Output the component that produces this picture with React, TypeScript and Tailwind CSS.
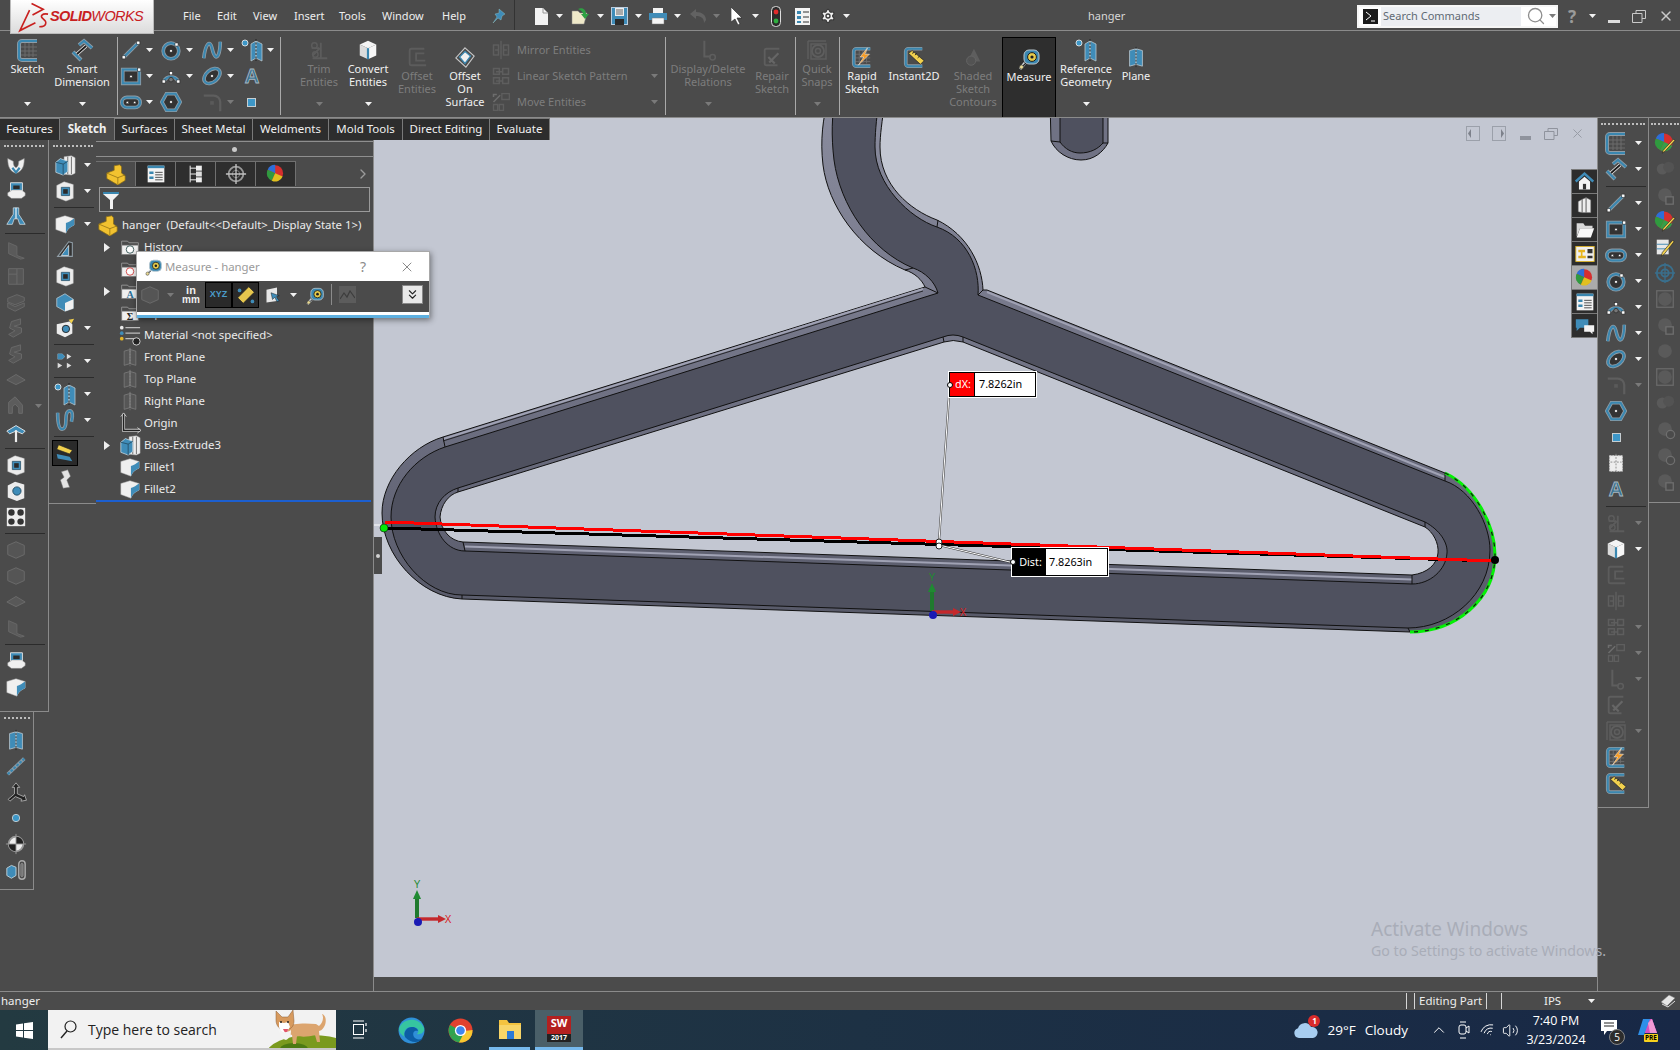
import type { ReactNode } from "react";
import { ChevronRight, ChevronUp, ChevronsDown, Search, Settings, Volume2, Wifi, X } from "lucide-react";

const ICON_BLUE = "#3a87b0";
const ICON_HALO = "#8f9ca5";
const DIM = "#606060";

function Ico({ s = 22, children }: { s?: number; children: ReactNode }) {
  return (
    <svg width={s} height={s} viewBox="0 0 24 24" fill="none" className="shrink-0">
      {children}
    </svg>
  );
}

function Str({ d, dim }: { d: string; dim?: boolean }) {
  if (dim) return <path d={d} stroke={DIM} strokeWidth="2.4" fill="none" />;
  return (
    <>
      <path d={d} stroke={ICON_HALO} strokeWidth="4" fill="none" />
      <path d={d} stroke={ICON_BLUE} strokeWidth="2.2" fill="none" />
    </>
  );
}

function Dot({ x, y, r = 1.7 }: { x: number; y: number; r?: number }) {
  return <rect x={x - r} y={y - r} width={r * 2} height={r * 2} fill="#fff" stroke="#222" strokeWidth="0.6" />;
}

function Caret({ off }: { off?: boolean }) {
  return (
    <svg width="7" height="4" viewBox="0 0 7 4" className="shrink-0">
      <path d="M0 0h7L3.5 4z" fill={off ? "#7a7a7a" : "#f2f2f2"} />
    </svg>
  );
}

const SketchI = ({ dim }: { dim?: boolean }) => (
  <Ico s={24}>
    <path d="M9 5v14M13 5v14M17 5v14M5 9h16M5 13h16M5 17h16" stroke="#6d6d6d" strokeWidth="1" />
    <Str d="M21 3H6a3 3 0 0 0-3 3v13a3 3 0 0 0 3 3h15" dim={dim} />
  </Ico>
);
const SmartDimI = () => (
  <Ico s={24}>
    <Str d="M9 7l5-4 8 7" />
    <Str d="M3 14l8 8" />
    <path d="M7 16l9-8" stroke="#eee" strokeWidth="3.4" />
    <path d="M7 16l9-8" stroke="#1c1c1c" strokeWidth="1.8" />
  </Ico>
);
const LineI = () => (
  <Ico>
    <Str d="M4 20L20 4" />
    <Dot x={4} y={20} />
    <Dot x={20} y={4} />
  </Ico>
);
const RectI = () => (
  <Ico>
    <rect x="3" y="5" width="18" height="15" fill="#333" />
    <Str d="M3 5h18v15H3z" />
    <Dot x={12} y={12.5} r={1.3} />
    <Dot x={21} y={5} />
  </Ico>
);
const SlotI = () => (
  <Ico>
    <rect x="2" y="7" width="20" height="11" rx="5.5" fill="#333" />
    <Str d="M7.5 7h9a5.5 5.5 0 0 1 0 11h-9a5.5 5.5 0 0 1 0-11z" />
    <Dot x={8} y={12.5} r={1.3} />
    <Dot x={16} y={12.5} r={1.3} />
  </Ico>
);
const CircleI = () => (
  <Ico>
    <circle cx="12" cy="13" r="8.5" fill="#333" />
    <Str d="M20.5 13a8.5 8.5 0 1 1-17 0 8.5 8.5 0 0 1 17 0z" />
    <Dot x={12} y={13} r={1.3} />
    <Dot x={18} y={6} />
  </Ico>
);
const ArcI = () => (
  <Ico>
    <Str d="M4 18a9 9 0 0 1 16 0" />
    <circle cx="12" cy="16" r="2.5" fill="#777" stroke="#333" />
    <Dot x={4} y={18} />
    <Dot x={12} y={9} />
    <Dot x={20} y={18} />
  </Ico>
);
const SplineI = () => (
  <Ico>
    <Str d="M3 21C5 4 10 1 12 10s5 12 7 7 2-10 2-14" />
  </Ico>
);
const EllipseI = () => (
  <Ico>
    <g transform="rotate(-40 12 12)">
      <ellipse cx="12" cy="12" rx="10" ry="6.5" fill="#333" stroke={ICON_HALO} strokeWidth="4" />
      <ellipse cx="12" cy="12" rx="10" ry="6.5" stroke={ICON_BLUE} strokeWidth="2.2" />
    </g>
    <Dot x={12} y={12} r={1.3} />
  </Ico>
);
const FilletI = () => (
  <Ico>
    <path d="M3 5h11a7 7 0 0 1 7 7v10" stroke="#5e5e5e" strokeWidth="2.4" />
    <rect x="10" y="11" width="4" height="4" fill="#5a5a5a" />
  </Ico>
);
const PolyI = () => (
  <Ico>
    <path d="M7 3h10l5 9-5 9H7l-5-9z" fill="#333" />
    <Str d="M7 3h10l5 9-5 9H7l-5-9z" />
    <Dot x={12} y={12} r={1.3} />
  </Ico>
);
const PointI = () => (
  <svg width="9" height="9" viewBox="0 0 9 9" className="mx-[6px] shrink-0">
    <rect x="0.5" y="0.5" width="8" height="8" fill="#3d97c8" stroke="#c6ced2" />
  </svg>
);
const PlaneI = ({ dim, s = 22 }: { dim?: boolean; s?: number }) => (
  <Ico s={s}>
    <path d="M5 5l7 -2v17l-7 2zM12 3l7 2v17l-7-2z" fill={dim ? "#565656" : "#3f8cb8"} stroke={dim ? "#808080" : "#b8c6ce"} strokeWidth="0.9" />
    <path d="M12 1v22" stroke={dim ? "#888" : "#222"} strokeDasharray="2 1.5" />
  </Ico>
);
const NoisyPlaneI = () => (
  <Ico>
    <path d="M5 4h14v17H5z" fill="#eee" stroke="#ccc" strokeDasharray="2 1" />
    <path d="M12 2v20M6 11h12" stroke="#888" strokeDasharray="2 1.5" />
  </Ico>
);
const TextI = () => (
  <Ico>
    <text x="12" y="20" textAnchor="middle" fontFamily="Liberation Sans" fontWeight="700" fontSize="22" fill="#35708f" stroke="#a8b7c0" strokeWidth="0.9">
      A
    </text>
  </Ico>
);
const TrimI = () => (
  <Ico>
    <path d="M5 18l8-8M14 4v17M5 21h16M4 10h8" stroke="#5c5c5c" strokeWidth="2" />
    <circle cx="7" cy="7" r="3" stroke="#5c5c5c" strokeWidth="1.6" />
    <circle cx="8" cy="17" r="3" stroke="#5c5c5c" strokeWidth="1.6" />
  </Ico>
);
const CubeI = () => (
  <Ico>
    <path d="M12 2l9 4-9 4-9-4z" fill="#f4f4f4" />
    <path d="M3 6l9 4v12l-9-4z" fill="#dcdcdc" />
    <path d="M21 6l-9 4v12l9-4z" fill="#f7f7f7" />
    <path d="M12 10v12" stroke={ICON_BLUE} strokeWidth="2.4" />
  </Ico>
);
const OffsetI = () => (
  <Ico>
    <path d="M20 3H6a2 2 0 0 0-2 2v14a2 2 0 0 0 2 2h16" stroke="#5c5c5c" strokeWidth="2" />
    <path d="M20 8h-9v8h10" stroke="#5c5c5c" strokeWidth="2" />
  </Ico>
);
const OffsetSurfI = () => (
  <Ico>
    <path d="M12 2l10 9-9 12L2 13z" fill="#4b4b4b" stroke="#c9c9c9" strokeWidth="1.2" />
    <path d="M12 6l6 5-6 8-6-7z" fill="#f0f0f0" stroke="#3a87b0" strokeWidth="1.4" />
  </Ico>
);
const MirrorI = () => (
  <Ico s={20}>
    <path d="M12 1v22M3 6h6v12H3zM15 6h6v12h-6zM5 12h4M15 12h4" stroke="#5e5e5e" strokeWidth="1.8" />
  </Ico>
);
const PatternI = () => (
  <Ico s={20}>
    <path d="M3 3h7v7H3zM14 3h7v7h-7zM3 14h7v7H3zM14 14h7v7h-7zM6 7h8M6 18h8" stroke="#5e5e5e" strokeWidth="1.8" />
  </Ico>
);
const MoveI = () => (
  <Ico s={20}>
    <path d="M3 12l8-8M3 6V3h4" stroke="#6d6d6d" strokeWidth="1.8" />
    <path d="M13 2h9v7h-9zM3 15h5v7H3zM10 15h5v7h-5z" stroke="#5e5e5e" strokeWidth="1.6" />
  </Ico>
);
const RelationI = () => (
  <Ico>
    <path d="M8 2v17h7" stroke="#5e5e5e" strokeWidth="2.2" />
    <circle cx="17" cy="20" r="3" stroke="#5e5e5e" strokeWidth="1.6" />
  </Ico>
);
const RepairI = () => (
  <Ico>
    <path d="M20 3H6a2 2 0 0 0-2 2v14a2 2 0 0 0 2 2h12" stroke="#5e5e5e" strokeWidth="2" />
    <path d="M9 18l10-10M8 12l7 7" stroke="#666" strokeWidth="2.4" />
  </Ico>
);
const SnapI = () => (
  <Ico s={24}>
    <path d="M3 3h18M3 3v18M6 6h15v15H6z" stroke="#5e5e5e" strokeWidth="1.4" />
    <circle cx="13" cy="13" r="6" stroke="#5e5e5e" strokeWidth="1.8" />
    <circle cx="13" cy="13" r="2.5" stroke="#5e5e5e" strokeWidth="1.4" />
  </Ico>
);
const RapidI = () => (
  <Ico>
    <path d="M9 5v14M13 5v14M17 5v14M5 9h16M5 13h16M5 17h16" stroke="#6d6d6d" strokeWidth="1" />
    <Str d="M21 3H6a3 3 0 0 0-3 3v13a3 3 0 0 0 3 3h15" />
    <path d="M18 2l-8 10h4l-6 9 12-12h-5z" fill="#f59a23" stroke="#fff" strokeWidth="0.5" />
  </Ico>
);
const InstantI = () => (
  <Ico>
    <Str d="M21 3H6a3 3 0 0 0-3 3v13a3 3 0 0 0 3 3h15" />
    <path d="M6 8l4-3 13 11-4 4z" fill="#f2d14e" stroke="#222" strokeWidth="0.7" />
    <path d="M10 8l2-1M13 10l2-2M16 13l2-2" stroke="#222" strokeWidth="1" />
  </Ico>
);
const ShadedI = () => (
  <Ico>
    <path d="M13 3l7 14H6z" fill="#5e5e5e" />
    <circle cx="10" cy="16" r="5" fill="#535353" stroke="#666" />
  </Ico>
);
const TapeI = ({ s = 24 }: { s?: number }) => (
  <Ico s={s}>
    <path d="M3 23l5-6" stroke="#cfd5d8" strokeWidth="3" />
    <path d="M6 20l3-3" stroke="#222" strokeWidth="1.2" />
    <rect x="7" y="4" width="15" height="14" rx="5" fill="#3a87b0" stroke="#b6c4cc" />
    <circle cx="15" cy="11" r="4.4" fill="#e6cb4b" stroke="#1d1d1d" />
    <circle cx="15" cy="11" r="1.6" fill="#1d1d1d" />
    <circle cx="4.5" cy="21" r="2" fill="#eadb95" stroke="#333" strokeWidth="0.6" />
  </Ico>
);
const RefGeoI = () => (
  <Ico s={24}>
    <path d="M11 6l5-3v17l-5 3zM16 3l6 3v17l-6-3z" fill="#3f8cb8" stroke="#b8c6ce" strokeWidth="0.8" />
    <path d="M16 1v22" stroke="#222" strokeDasharray="2 1.5" />
    <circle cx="5" cy="5" r="3" fill="#3d97c8" stroke="#d6dde0" />
  </Ico>
);

const BoxI = () => (
  <Ico>
    <path d="M11 3l8-1 4 2v17l-4 2-8-1z" fill="#ededed" stroke="#ababab" strokeWidth="0.5" />
    <path d="M15 3v19M19 3v19" stroke="#5a5a5a" strokeWidth="0.9" />
    <path d="M2 9l5-4 8 3v11l-5 4-8-3z" fill="#3f8cb8" stroke="#cfe0e8" strokeWidth="0.8" />
    <path d="M10 11v12M10 11L2 9M10 11l5-3" stroke="#234b62" strokeWidth="0.9" />
  </Ico>
);
const WedgeI = () => (
  <Ico>
    <path d="M2 6l10-3 10 3v7c-3 2-7 3-9 9L2 18z" fill="#efefef" stroke="#aaa" strokeWidth="0.5" />
    <path d="M13 11c3-1 6-3 9-5v7c-3 2-7 3-9 9z" fill="#3f8cb8" />
  </Ico>
);
const BlueBoxI = () => (
  <Ico>
    <path d="M3 8l9-5 9 6v10l-9 3-9-5z" fill="#3f8cb8" stroke="#c1d2da" strokeWidth="0.8" />
    <path d="M12 13l9-4v10l-9 3z" fill="#f1f1f1" />
  </Ico>
);
const FrameI = () => (
  <Ico>
    <path d="M3 6l8-4 10 3v15l-8 3-10-4z" fill="#ececec" stroke="#bbb" strokeWidth="0.5" />
    <path d="M8 8h9v9H8z" fill="#3f8cb8" stroke="#234b62" strokeWidth="0.8" />
    <path d="M10 10h5v5h-5z" fill="#2a2a2a" />
  </Ico>
);
const BendI = () => (
  <Ico>
    <path d="M4 19L16 3l4 1v15z" fill="#333" stroke={ICON_HALO} strokeWidth="1.2" />
    <path d="M8 18l8-11v11z" fill="#3f8cb8" stroke="#fff" strokeWidth="0.7" />
  </Ico>
);
const UI = () => (
  <Ico>
    <path d="M3 5c0 10 3 14 9 16 6-2 9-6 9-16l-6 3c0 4-1 6-3 7-2-1-3-3-3-7z" fill="#efefef" stroke="#999" strokeWidth="0.6" />
    <path d="M8 15l4 5 4-5" stroke={ICON_BLUE} strokeWidth="2.4" />
  </Ico>
);
const PrintBoxI = () => (
  <Ico>
    <path d="M6 3h13v9H6z" fill="#3f8cb8" stroke="#e6e6e6" />
    <path d="M9 6h7v4H9z" fill="#2b2b2b" />
    <path d="M3 14l5-3h10l4 3v3l-4 3H7l-4-3z" fill="#f0f0f0" stroke="#9f9f9f" strokeWidth="0.5" />
  </Ico>
);
const FunnelBlueI = () => (
  <Ico>
    <path d="M9 2h6v7l7 11h-6l-2-6h-4l-2 6H2l7-11z" fill="#3f8cb8" stroke="#d7e1e6" strokeWidth="0.8" />
    <path d="M12 2v12" stroke="#fff" strokeWidth="1.2" />
  </Ico>
);
const DimPartI = ({ v = 0 }: { v?: number }) => (
  <Ico>
    {v === 0 && <path d="M4 4l9 4v10l8 3-4 1-13-6z" fill="#5a5a5a" stroke="#686868" />}
    {v === 1 && <path d="M4 4h16v17H4zM4 10h9v11M13 4v6" fill="#565656" stroke="#6b6b6b" />}
    {v === 2 && <path d="M3 8l10-4 8 3v4l-10 4-8-3zM3 13l8 4 10-4v4l-10 5-8-4z" fill="#545454" stroke="#6a6a6a" />}
    {v === 3 && <path d="M7 5l10-3v6l-7 2 8 2v5l-9 5-5-3 7-4-6-3z" fill="#565656" stroke="#6a6a6a" />}
    {v === 4 && <path d="M2 12l10-6 10 6-10 5z" fill="#585858" stroke="#6c6c6c" />}
    {v === 5 && <path d="M4 20V8l7-6 8 9v9h-4v-6l-4-4-3 3v7z" fill="#5c5c5c" stroke="#6c6c6c" />}
    {v === 6 && <path d="M3 7l9-4 9 4v10l-9 4-9-4z" fill="#555" stroke="#6c6c6c" />}
  </Ico>
);
const DimBallI = ({ v = 0 }: { v?: number }) => (
  <Ico>
    {v === 1 && <rect x="3" y="3" width="18" height="18" stroke="#6a6a6a" strokeWidth="1.4" />}
    <circle cx={v === 2 ? 9 : 12} cy={12} r={v === 2 ? 6 : 7.5} fill="#5a5a5a" />
    {v === 2 && <circle cx="16" cy="10" r="6" fill="#535353" />}
    {v === 3 && <rect x="13" y="14" width="8" height="8" fill="#4b4b4b" stroke="#6f6f6f" strokeWidth="1.4" />}
    {v === 4 && <circle cx="18" cy="18" r="4.5" fill="#4b4b4b" stroke="#6f6f6f" strokeWidth="1.4" />}
  </Ico>
);
const ColorBallI = ({ s = 22, pencil }: { s?: number; pencil?: boolean }) => (
  <Ico s={s}>
    <circle cx="11" cy="11" r="9.5" fill="#d62f2f" />
    <path d="M11 11L2 7a9.5 9.5 0 0 1 9-6z" fill="#2d6ed8" />
    <path d="M11 11L2 7a9.5 9.5 0 0 0 5 13z" fill="#2f9a3f" />
    <path d="M11 11l-4 9a9.5 9.5 0 0 0 13-5z" fill={pencil ? "#35a048" : "#e0c01f"} />
    {pencil && <path d="M23 9l-11 12-3 2 1-3 11-12z" fill="#f2d14e" stroke="#222" strokeWidth="0.7" />}
  </Ico>
);

type Row = "sep" | { i: ReactNode; c?: "on" | "off"; sel?: boolean };

const col1: Row[] = [
  { i: <UI /> }, { i: <PrintBoxI /> }, { i: <FunnelBlueI /> }, "sep",
  { i: <DimPartI v={0} /> }, { i: <DimPartI v={1} /> }, { i: <DimPartI v={2} /> }, { i: <DimPartI v={3} /> }, { i: <DimPartI v={3} /> }, { i: <DimPartI v={4} /> }, { i: <DimPartI v={5} />, c: "off" },
  { i: <Ico><path d="M2 11l10-6 10 6-3 3-7-3-7 3z" fill="#3f8cb8" stroke="#e8e8e8" /><path d="M12 10v13" stroke="#eee" strokeWidth="2.4" /></Ico> }, "sep",
  { i: <FrameI /> }, { i: <Ico><path d="M3 6l8-4 10 3v15l-8 3-10-4z" fill="#ececec" /><circle cx="13" cy="12" r="4.5" fill="#3f8cb8" stroke="#234b62" /></Ico> },
  { i: <Ico><path d="M2 2h20v20H2z" fill="#ededed" /><circle cx="7" cy="7" r="3.5" fill="#333" /><circle cx="17" cy="7" r="3.5" fill="#333" /><circle cx="7" cy="17" r="3.5" fill="#333" /><circle cx="17" cy="17" r="3.5" fill="#333" /></Ico> }, "sep",
  { i: <DimPartI v={6} /> }, { i: <DimPartI v={6} /> }, { i: <DimPartI v={4} /> }, { i: <DimPartI v={0} /> }, "sep",
  { i: <PrintBoxI /> }, { i: <WedgeI /> },
];

const col2: Row[] = [
  { i: <BoxI />, c: "on" }, { i: <FrameI />, c: "on" }, "sep",
  { i: <WedgeI />, c: "on" }, { i: <BendI /> }, { i: <FrameI /> }, { i: <BlueBoxI /> },
  { i: <Ico><path d="M3 8l14-3 3 3v10l-8 4-9-4z" fill="#ececec" /><circle cx="13" cy="13" r="4" fill="#3f8cb8" stroke="#222" /><path d="M16 3l6-1-3 5z" fill="#f2d14e" /></Ico>, c: "on" }, "sep",
  { i: <Ico><path d="M4 4h5l3 3-3 3H4zM14 4l5 3-5 3zM4 14l5 3-5 3zM14 14l5 3-5 3z" fill="#ddd" /><path d="M4 4h5l3 3-3 3H4z" fill="#3f8cb8" /></Ico>, c: "on" }, "sep",
  { i: <RefGeoI />, c: "on" },
  { i: <Ico><Str d="M4 4c0 14 2 18 5 18s4-5 4-10 1-10 4-10 4 5 2 12" /></Ico>, c: "on" }, "sep",
  { i: <Ico><path d="M5 3l15 6-3 4L3 8z" fill="#f2d14e" stroke="#222" strokeWidth="0.7" /><path d="M3 13l14 3 3 5-16-3z" fill="#3f8cb8" /></Ico>, sel: true },
  { i: <Ico><path d="M8 4l7-2 3 7-4 4 3 8-7 1-3-9 4-3z" fill="#e4e4e4" stroke="#777" strokeWidth="0.5" /></Ico> },
];

const col3: Row[] = [
  { i: <PlaneI /> },
  { i: <Ico><path d="M3 21L21 4" stroke={ICON_HALO} strokeWidth="4" /><path d="M3 21L21 4" stroke={ICON_BLUE} strokeWidth="2.4" strokeDasharray="3 1.4" /></Ico> },
  { i: <Ico><path d="M12 2l4 5h-2.6v7l7 3 1-2 2 6-6 1 1-2-7-3-6 5-2-2 7-6V7H8z" fill="#222" stroke="#c8c8c8" strokeWidth="0.8" /></Ico> },
  { i: <Ico><circle cx="12" cy="12" r="4" fill="#3d97c8" stroke="#c6ced2" /></Ico> },
  { i: <Ico><circle cx="12" cy="12" r="8" fill="#eee" stroke="#999" strokeWidth="2" /><path d="M12 12V4a8 8 0 0 1 8 8zM12 12v8a8 8 0 0 1-8-8z" fill="#222" /><path d="M12 1v22M1 12h22" stroke="#999" /></Ico> },
  { i: <Ico><path d="M2 10l5-3 5 2v9l-5 3-5-3z" fill="#3f8cb8" stroke="#c1d2da" /><rect x="15" y="2" width="7" height="20" rx="3.5" stroke="#aaa" strokeWidth="1.6" /><rect x="17.5" y="5" width="2" height="14" rx="1" stroke="#aaa" /></Ico> },
];

const rightA: Row[] = [
  { i: <SketchI />, c: "on" }, { i: <SmartDimI />, c: "on" }, "sep",
  { i: <LineI />, c: "on" }, { i: <RectI />, c: "on" }, { i: <SlotI />, c: "on" }, { i: <CircleI />, c: "on" }, { i: <ArcI />, c: "on" }, { i: <SplineI />, c: "on" }, { i: <EllipseI />, c: "on" }, { i: <FilletI />, c: "off" }, { i: <PolyI /> }, { i: <PointI /> }, { i: <NoisyPlaneI /> }, { i: <TextI /> }, "sep",
  { i: <TrimI />, c: "off" }, { i: <CubeI />, c: "on" }, { i: <OffsetI /> }, { i: <MirrorI /> }, { i: <PatternI />, c: "off" }, { i: <MoveI />, c: "off" }, { i: <RelationI />, c: "off" }, { i: <RepairI /> }, { i: <SnapI />, c: "off" }, { i: <RapidI /> }, { i: <InstantI /> },
];

const rightB: Row[] = [
  { i: <ColorBallI pencil /> }, { i: <DimBallI v={2} /> }, { i: <DimBallI v={3} /> }, { i: <ColorBallI pencil /> },
  { i: <Ico><path d="M3 4h13v16H3z" fill="#e8e8e8" /><path d="M3 9h13M3 14h13" stroke="#3a87b0" /><path d="M22 6L11 20l-3 2 1-4L20 5z" fill="#f2d14e" stroke="#222" strokeWidth="0.7" /></Ico> },
  { i: <Ico><circle cx="12" cy="12" r="9" stroke="#3a6f8c" strokeWidth="2" /><circle cx="12" cy="12" r="4" stroke="#3a6f8c" strokeWidth="2" /><path d="M12 1v22M1 12h22" stroke="#3a6f8c" strokeWidth="1.4" /></Ico> },
  { i: <DimBallI v={1} /> }, { i: <DimBallI v={3} /> }, { i: <DimBallI /> }, { i: <DimBallI v={1} /> }, { i: <DimBallI v={2} /> }, { i: <DimBallI v={4} /> }, { i: <DimBallI v={4} /> }, { i: <DimBallI v={3} /> },
];

function ToolRow({ r, pad, cm }: { r: Exclude<Row, "sep">; pad: string; cm: string }) {
  return (
    <div className={`flex h-[26px] items-center ${pad}`}>
      <span className={`flex h-[26px] w-[26px] -ml-[2px] items-center justify-center ${r.sel ? "border border-black bg-[#2a2a2a]" : ""}`}>{r.i}</span>
      {r.c && <span className={cm}><Caret off={r.c === "off"} /></span>}
    </div>
  );
}

function ToolCol({ rows, pad, cm, sepH, line }: { rows: Row[]; pad: string; cm: string; sepH: string; line: string }) {
  return (
    <>
      {rows.map((r, n) =>
        r === "sep" ? (
          <div key={n} className={`flex items-center ${sepH}`}>
            <div className={`h-[1px] bg-[#2b2b2b] ${line}`} />
          </div>
        ) : (
          <ToolRow key={n} r={r} pad={pad} cm={cm} />
        ),
      )}
    </>
  );
}

function Grip({ w }: { w: string }) {
  return (
    <div className="flex h-[12px] items-center justify-center">
      <div className={`border-t-2 border-dotted border-[#bdbdbd] ${w}`} />
    </div>
  );
}

function RibbonBtn({ w, pt, icon, lines, off, caret, sel }: { w: string; pt: string; icon: ReactNode; lines: string[]; off?: boolean; caret?: boolean; sel?: boolean }) {
  return (
    <div className={`relative flex shrink-0 flex-col items-center leading-[13px] ${w} ${pt} ${off ? "text-[#7d7d7d]" : "text-[#f0f0f0]"} ${sel ? "my-[6px] -mb-[2px] border border-black bg-[#2e2e2e]" : ""}`}>
      <div className="flex h-[24px] items-center">{icon}</div>
      {lines.map((l) => (
        <span key={l} className="whitespace-nowrap">{l}</span>
      ))}
      {caret && (
        <span className="absolute bottom-[11px]"><Caret off={off} /></span>
      )}
    </div>
  );
}

function VDiv({ ml, mr }: { ml: string; mr: string }) {
  return <div className={`my-[6px] h-[78px] w-[1px] shrink-0 bg-[#a9a9a9] ${ml} ${mr}`} />;
}

function SketchCell({ i, c }: { i: ReactNode; c?: "on" | "off" }) {
  return (
    <div className="flex h-[26px] w-[40px] items-center pl-[2px]">
      <span className="flex w-[22px] justify-center">{i}</span>
      {c && <span className="ml-[4px]"><Caret off={c === "off"} /></span>}
    </div>
  );
}

function Ribbon() {
  return (
    <div className="flex h-[87px] shrink-0 border-t border-[#8b8b8b] bg-[#4b4b4b] text-[11px]">
      <RibbonBtn w="w-[55px]" pt="pt-[7px]" icon={<SketchI />} lines={["Sketch"]} caret />
      <RibbonBtn w="w-[54px]" pt="pt-[7px]" icon={<SmartDimI />} lines={["Smart", "Dimension"]} caret />
      <VDiv ml="ml-[8px]" mr="mr-[0px]" />
      <div className="grid h-[85px] w-[161px] shrink-0 grid-cols-4 grid-rows-[26px_26px_26px] pt-[6px]">
        <SketchCell i={<LineI />} c="on" />
        <SketchCell i={<CircleI />} c="on" />
        <SketchCell i={<SplineI />} c="on" />
        <SketchCell i={<RefGeoI />} c="on" />
        <SketchCell i={<RectI />} c="on" />
        <SketchCell i={<ArcI />} c="on" />
        <SketchCell i={<EllipseI />} c="on" />
        <SketchCell i={<TextI />} />
        <SketchCell i={<SlotI />} c="on" />
        <SketchCell i={<PolyI />} />
        <SketchCell i={<FilletI />} c="off" />
        <SketchCell i={<PointI />} />
      </div>
      <VDiv ml="ml-[1px]" mr="mr-[15px]" />
      <RibbonBtn w="w-[46px]" pt="pt-[7px]" icon={<TrimI />} lines={["Trim", "Entities"]} off caret />
      <RibbonBtn w="w-[52px]" pt="pt-[7px]" icon={<CubeI />} lines={["Convert", "Entities"]} caret />
      <RibbonBtn w="w-[46px]" pt="pt-[14px]" icon={<OffsetI />} lines={["Offset", "Entities"]} off />
      <RibbonBtn w="w-[50px]" pt="pt-[14px]" icon={<OffsetSurfI />} lines={["Offset", "On", "Surface"]} />
      <div className="flex w-[175px] shrink-0 flex-col pl-[1px] pt-[6px] text-[#7d7d7d]">
        <div className="flex h-[26px] items-center"><MirrorI /><span className="ml-[6px]">Mirror Entities</span></div>
        <div className="flex h-[26px] items-center"><PatternI /><span className="ml-[6px]">Linear Sketch Pattern</span><span className="ml-auto mr-[7px]"><Caret off /></span></div>
        <div className="flex h-[26px] items-center"><MoveI /><span className="ml-[6px]">Move Entities</span><span className="ml-auto mr-[7px]"><Caret off /></span></div>
      </div>
      <VDiv ml="ml-[0px]" mr="mr-[0px]" />
      <RibbonBtn w="w-[84px]" pt="pt-[7px]" icon={<RelationI />} lines={["Display/Delete", "Relations"]} off caret />
      <RibbonBtn w="w-[44px]" pt="pt-[14px]" icon={<RepairI />} lines={["Repair", "Sketch"]} off />
      <VDiv ml="ml-[1px]" mr="mr-[0px]" />
      <RibbonBtn w="w-[42px]" pt="pt-[7px]" icon={<SnapI />} lines={["Quick", "Snaps"]} off caret />
      <VDiv ml="ml-[1px]" mr="mr-[0px]" />
      <RibbonBtn w="w-[44px]" pt="pt-[14px]" icon={<RapidI />} lines={["Rapid", "Sketch"]} />
      <RibbonBtn w="w-[60px]" pt="pt-[14px]" icon={<InstantI />} lines={["Instant2D"]} />
      <RibbonBtn w="w-[58px]" pt="pt-[14px]" icon={<ShadedI />} lines={["Shaded", "Sketch", "Contours"]} off />
      <RibbonBtn w="w-[54px]" pt="pt-[8px]" icon={<TapeI />} lines={["Measure"]} sel />
      <RibbonBtn w="w-[60px]" pt="pt-[7px]" icon={<RefGeoI />} lines={["Reference", "Geometry"]} caret />
      <RibbonBtn w="w-[40px]" pt="pt-[14px]" icon={<PlaneI />} lines={["Plane"]} />
    </div>
  );
}

const menus = [
  { t: "File", w: "w-[34px]" },
  { t: "Edit", w: "w-[36px]" },
  { t: "View", w: "w-[41px]" },
  { t: "Insert", w: "w-[45px]" },
  { t: "Tools", w: "w-[43px]" },
  { t: "Window", w: "w-[60px]" },
  { t: "Help", w: "w-[50px]" },
];

function Logo() {
  return (
    <div className="absolute left-[10px] top-0 z-20 flex h-[34px] w-[144px] items-center border-b border-r border-l border-[#bbb] bg-gradient-to-b from-white to-[#dcdcdc] pl-[5px]">
      <svg width="33" height="32" viewBox="0 0 34 32" fill="none" className="shrink-0">
        <path d="M16 2l12 6-11 6M14 9L4 30l16-8M33 13c-6-1-9 2-5 5 4 3 4 8-4 8" stroke="#c8201f" strokeWidth="1.7" />
      </svg>
      <span className="ml-[1px] text-[14.5px] italic leading-none tracking-[-0.6px] text-[#c8201f] font-['Liberation_Sans',sans-serif]">
        <b>SOLID</b>WORKS
      </span>
    </div>
  );
}

function TitleBar() {
  return (
    <div className="flex h-[30px] shrink-0 items-center bg-[#4b4b4b] pt-[2px] text-[11px] text-[#eee]">
      <div className="w-[183px] shrink-0" />
      {menus.map((m) => (
        <span key={m.t} className={`shrink-0 ${m.w}`}>{m.t}</span>
      ))}
      <svg width="14" height="16" viewBox="0 0 14 16" className="shrink-0"><path d="M7 1l6 5-3 2-1 4-3-2-5 5 4-6-2-3 4-1z" fill="#3f8cb8" stroke="#9cc" strokeWidth="0.4" /></svg>
      <div className="ml-[8px] -mt-[2px] h-[30px] w-[1px] shrink-0 bg-[#333]" />
      <svg width="13" height="17" viewBox="0 0 13 17" className="ml-[20px] shrink-0"><path d="M0 0h8l5 5v12H0z" fill="#f3f3f3" /><path d="M8 0v5h5" stroke="#999" fill="none" /></svg>
      <span className="ml-[8px]"><Caret /></span>
      <svg width="19" height="18" viewBox="0 0 19 18" className="ml-[8px] shrink-0"><path d="M1 4h6l2 2h7L13 17H1z" fill="#efe9c9" stroke="#888" strokeWidth="0.5" /><path d="M7 2c5-2 8 1 8 5h3l-4 5-4-5h2c0-2-2-4-5-5z" fill="#2ea043" /></svg>
      <span className="ml-[7px]"><Caret /></span>
      <svg width="17" height="18" viewBox="0 0 17 18" className="ml-[7px] shrink-0"><rect x="0.5" y="0.5" width="16" height="17" fill="#3f8cb8" stroke="#bcd" /><rect x="4" y="1" width="9" height="8" fill="#eee" /><path d="M5 3h7M5 5h7M5 7h7" stroke="#666" /><rect x="4" y="12" width="9" height="6" fill="#2c2c2c" /></svg>
      <span className="ml-[7px]"><Caret /></span>
      <svg width="18" height="17" viewBox="0 0 18 17" className="ml-[7px] shrink-0"><rect x="4" y="0" width="10" height="5" fill="#f2f2f2" /><rect x="0" y="5" width="18" height="7" fill="#3f8cb8" /><rect x="3" y="10" width="12" height="6" fill="#f5f5f5" stroke="#777" strokeWidth="0.5" /></svg>
      <span className="ml-[7px]"><Caret /></span>
      <svg width="18" height="16" viewBox="0 0 18 16" className="ml-[8px] shrink-0"><path d="M1 6l6-5v3c6 0 10 3 10 8l-2 3c0-5-3-7-8-7v3z" fill="#626262" /></svg>
      <span className="ml-[6px]"><Caret off /></span>
      <svg width="11" height="18" viewBox="0 0 11 18" className="ml-[11px] shrink-0"><path d="M0 0l11 11H6l3 6-2 1-3-6-4 3z" fill="#fff" stroke="#222" strokeWidth="0.6" /></svg>
      <span className="ml-[10px]"><Caret /></span>
      <svg width="10" height="21" viewBox="0 0 10 21" className="ml-[12px] shrink-0"><rect x="0.5" y="0.5" width="9" height="20" rx="4" fill="#2c2c2c" stroke="#ddd" /><circle cx="5" cy="6" r="2.4" fill="#e02b2b" /><circle cx="5" cy="15" r="2.4" fill="#2fae3f" /></svg>
      <svg width="15" height="17" viewBox="0 0 15 17" className="ml-[14px] shrink-0"><rect width="15" height="17" fill="#f3f3f3" /><path d="M2 3h4v3H2zM2 8h4v3H2zM2 13h4v2H2z" fill="#3a87b0" /><path d="M8 4h6M8 9h6M8 14h6" stroke="#333" /></svg>
      <Settings size={16} className="ml-[10px] shrink-0" fill="#f0f0f0" stroke="#3a3a3a" strokeWidth={2} />
      <span className="ml-[7px]"><Caret /></span>
      <span className="ml-[238px] text-[#d8d8d8]">hanger</span>
      <div className="ml-auto flex h-[23px] w-[201px] shrink-0 items-center border-2 border-[#f6f6f6] bg-white pl-[4px] mr-[10px]">
        <svg width="15" height="15" viewBox="0 0 15 15" className="shrink-0"><rect width="15" height="15" fill="#1b1b1b" /><path d="M3 3l5 4-5 4M8 12h4" stroke="#fff" fill="none" /></svg>
        <span className="ml-[3px] flex h-full w-[140px] items-center bg-[#eceef2] pl-[2px] text-[#5f6a74]">Search Commands</span>
        <Search size={20} className="ml-[5px] shrink-0 text-[#8e8e8e]" strokeWidth={1.6} />
        <span className="ml-[3px]"><Caret off /></span>
      </div>
      <span className="w-[14px] text-[17px] font-bold leading-none text-[#9a9a9a]">?</span>
      <span className="ml-[7px]"><Caret /></span>
      <div className="ml-[12px] mt-[10px] h-[3px] w-[12px] bg-[#dcdcdc]" />
      <svg width="14" height="13" viewBox="0 0 14 13" fill="none" className="ml-[12px] shrink-0"><path d="M4 3V.5h9.500v8H10M.5 3.500h9.500v9H.5z" stroke="#c9c9c9" /></svg>
      <X size={16} className="ml-[12px] mr-[6px] shrink-0 text-[#c9c9c9]" strokeWidth={2.2} />
    </div>
  );
}

const tabs = [
  { t: "Features", w: "w-[60px]" },
  { t: "Sketch", w: "w-[55px]", on: true },
  { t: "Surfaces", w: "w-[60px]" },
  { t: "Sheet Metal", w: "w-[78px]" },
  { t: "Weldments", w: "w-[76px]" },
  { t: "Mold Tools", w: "w-[74px]" },
  { t: "Direct Editing", w: "w-[87px]" },
  { t: "Evaluate", w: "w-[60px]" },
];

function Tabs() {
  return (
    <div className="absolute left-0 top-0 z-10 flex h-[22px] text-[11.5px] text-[#f0f0f0]">
      {tabs.map((x) => (
        <div key={x.t} className={`flex items-center justify-center border-r border-[#7a7a7a] pb-[1px] ${x.w} ${x.on ? "bg-[#4b4b4b] font-bold" : "border-t bg-[#2d2d2d]"}`}>
          {x.t}
        </div>
      ))}
    </div>
  );
}

const FolderI = ({ kind }: { kind: "clock" | "gauge" | "A" | "sum" }) => (
  <Ico s={20}>
    <path d="M2 5h7l2 2h11v14H2z" fill="#efefef" stroke="#777" strokeWidth="0.8" />
    <path d="M2 5h7l2 2h11v3H2z" fill="#4b4b4b" stroke="#999" strokeWidth="0.8" />
    {kind === "clock" && <circle cx="12" cy="15" r="4.5" stroke="#244" fill="#fff" />}
    {kind === "gauge" && <circle cx="12" cy="15" r="4.5" stroke="#c33" fill="#fff" />}
    {kind === "A" && <text x="12" y="20" textAnchor="middle" fontFamily="Liberation Serif" fontWeight="700" fontSize="12" fill="#2a6f9a">A</text>}
    {kind === "sum" && <text x="12" y="20" textAnchor="middle" fontFamily="Liberation Serif" fontWeight="700" fontSize="12" fill="#222">Σ</text>}
  </Ico>
);
const PartYellowI = ({ s = 22 }: { s?: number }) => (
  <Ico s={s}>
    <path d="M2 11l8-3V3l6-1 2 2v7l4 3v5l-8 5L2 17z" fill="#f2c230" stroke="#8a6c14" strokeWidth="0.8" />
    <path d="M2 11l12 5 8-3M14 16v7" stroke="#8a6c14" strokeWidth="0.8" />
  </Ico>
);
const MaterialI = () => (
  <Ico s={22}>
    <path d="M7 4h16M7 10h16M7 16h10" stroke="#bdbdbd" strokeWidth="1.4" />
    <circle cx="3" cy="4" r="2" fill="#e9e9e9" />
    <circle cx="3" cy="10" r="2" fill="#3f8cb8" />
    <circle cx="3" cy="16" r="2" fill="#e3b52a" />
    <circle cx="19" cy="19" r="4" fill="#222" stroke="#ddd" />
  </Ico>
);
const OriginI = () => (
  <Ico s={22}>
    <path d="M5 2v18h18" stroke="#c4c4c4" strokeWidth="3.2" />
    <path d="M5 2v18h18" stroke="#222" strokeWidth="1.5" />
    <path d="M2 5l3-4 3 4M20 17l4 3-4 3" stroke="#ccc" strokeWidth="1" />
  </Ico>
);
const GreyPlaneI = () => <PlaneI dim s={20} />;

function TreeRow({ arrow, icon, label }: { arrow?: boolean; icon: ReactNode; label: string }) {
  return (
    <div className="flex h-[22px] shrink-0 items-center">
      <span className="flex w-[24px] shrink-0 pl-[8px]">
        {arrow && (
          <svg width="6" height="9" viewBox="0 0 6 9"><path d="M0 0l6 4.500L0 9z" fill="#eee" /></svg>
        )}
      </span>
      <span className="flex w-[20px] shrink-0 justify-center">{icon}</span>
      <span className="ml-[4px] whitespace-nowrap">{label}</span>
    </div>
  );
}

function FeatureTree() {
  const tabIcons = [
    <PartYellowI key="a" />,
    <Ico key="b" s={20}><rect x="2" y="2" width="20" height="20" fill="#f3f3f3" /><rect x="2" y="2" width="20" height="3" fill="#3a87b0" /><path d="M4 9h5v3H4zM4 15h5v3H4z" fill="#3a87b0" /><path d="M11 10h9M11 13h9M11 16h9M11 19h9" stroke="#333" /></Ico>,
    <Ico key="c" s={20}><path d="M5 2v20M5 5h8M5 12h8M5 19h8" stroke="#eee" strokeWidth="1.2" /><rect x="12" y="2" width="7" height="6" fill="#eee" /><rect x="12" y="9" width="7" height="6" fill="#ddd" /><rect x="12" y="16" width="7" height="6" fill="#eee" /></Ico>,
    <Ico key="d" s={22}><circle cx="12" cy="12" r="8" stroke="#999" strokeWidth="2" /><circle cx="12" cy="12" r="4" fill="#1d1d1d" stroke="#888" /><path d="M12 1v22M1 12h22" stroke="#c0c0c0" strokeWidth="1.5" /></Ico>,
    <ColorBallI key="e" s={20} />,
  ];
  return (
    <div className="flex h-[364px] w-[277px] shrink-0 flex-col text-[11.4px] text-[#ececec]">
      <div className="h-[2px] border-b border-[#8f8f8f]" />
      <div className="flex h-[15px] shrink-0 items-center justify-center border-b border-[#8f8f8f]">
        <div className="h-[5px] w-[5px] rounded-full bg-[#c9c9c9]" />
      </div>
      <div className="mt-[4px] flex h-[25px] shrink-0 items-center">
        {tabIcons.map((t, n) => (
          <div key={n} className={`flex h-[25px] w-[40px] items-center justify-center border-r border-t border-[#707070] ${n === 0 ? "bg-[#4b4b4b]" : "bg-[#2e2e2e]"}`}>
            {t}
          </div>
        ))}
        <ChevronRight size={16} strokeWidth={2} className="ml-[59px] text-[#9b9b9b]" />
      </div>
      <div className="ml-[3px] mt-[1px] flex h-[25px] w-[271px] shrink-0 items-center border border-[#9a9a9a] pl-[3px]">
        <svg width="16" height="21" viewBox="0 0 16 21"><path d="M0 3h16v2l-6 6v9H7v-9L0 5z" fill="#f2f2f2" /><path d="M0 3h16v2H0z" fill="#3a87b0" /></svg>
      </div>
      <div className="mt-[2px] flex h-[22px] shrink-0 items-center pl-[1px]">
        <PartYellowI />
        <span className="ml-[3px] whitespace-pre">{"hanger  (Default<<Default>_Display State 1>)"}</span>
      </div>
      <TreeRow arrow icon={<FolderI kind="clock" />} label="History" />
      <TreeRow icon={<FolderI kind="gauge" />} label="Sensors" />
      <TreeRow arrow icon={<FolderI kind="A" />} label="Annotations" />
      <TreeRow icon={<FolderI kind="sum" />} label="Equations" />
      <TreeRow icon={<MaterialI />} label="Material <not specified>" />
      <TreeRow icon={<GreyPlaneI />} label="Front Plane" />
      <TreeRow icon={<GreyPlaneI />} label="Top Plane" />
      <TreeRow icon={<GreyPlaneI />} label="Right Plane" />
      <TreeRow icon={<OriginI />} label="Origin" />
      <TreeRow arrow icon={<BoxI />} label="Boss-Extrude3" />
      <TreeRow icon={<WedgeI />} label="Fillet1" />
      <TreeRow icon={<WedgeI />} label="Fillet2" />
      <div className="h-[2px] w-[275px] bg-[#1c5fd0]" />
    </div>
  );
}

function MeasureDialog() {
  return (
    <div className="absolute left-[136px] top-[251px] z-30 w-[294px] shadow-[1px_2px_6px_rgba(0,0,0,0.45)] border border-[#a8a8a8] border-b-0 text-[11.4px]">
      <div className="flex h-[29px] items-center bg-white pl-[7px]">
        <TapeI s={19} />
        <span className="ml-[2px] text-[#9a9a9a]">Measure - hanger</span>
        <span className="ml-auto text-[14px] text-[#8b8b8b]">?</span>
        <X size={16} className="ml-[33px] mr-[14px] text-[#777]" strokeWidth={1.3} />
      </div>
      <div className="flex h-[31px] items-center bg-[#4b4b4b] pb-[4px] pl-[2px]">
        <DimPartI v={6} />
        <span className="ml-[6px]"><Caret off /></span>
        <span className="ml-[8px] flex w-[18px] flex-col items-center text-[11px] font-bold leading-[10px] text-[#eee] font-['Liberation_Sans',sans-serif]">
          <span>in</span>
          <span className="text-[10px]">mm</span>
        </span>
        <span className="ml-[5px] flex h-[26px] w-[27px] items-center justify-center border border-black bg-[#2a2a2a] text-[9px] font-bold text-[#4a9bc9] font-['Liberation_Sans',sans-serif]">XYZ</span>
        <span className="flex h-[26px] w-[27px] items-center justify-center border border-black bg-[#2a2a2a]">
          <Ico s={22}>
            <path d="M3 15L15 3l6 6L9 21z" fill="#e6c74e" stroke="#222" strokeWidth="0.7" />
            <circle cx="5" cy="7" r="2" fill="#3f8cb8" />
            <circle cx="19" cy="19" r="2" fill="#3f8cb8" />
          </Ico>
        </span>
        <span className="ml-[6px]">
          <Ico s={18}>
            <path d="M2 5l14-3v18L2 22z" fill="#e7e7e7" />
            <path d="M8 9l11 4-4 1 4 6-3 1-3-6-3 3z" fill="#3f8cb8" stroke="#111" strokeWidth="0.6" />
          </Ico>
        </span>
        <span className="ml-[7px]"><Caret /></span>
        <span className="ml-[8px]"><TapeI s={20} /></span>
        <div className="ml-[6px] h-[21px] w-[1px] bg-[#8b8b8b]" />
        <span className="ml-[7px] flex h-[17px] w-[17px] items-center justify-center bg-[#5c5c5c]">
          <svg width="15" height="10" viewBox="0 0 15 10" fill="none"><path d="M0 9l4-6 3 4 3-6 5 7" stroke="#3d3d3d" strokeWidth="1.2" /></svg>
        </span>
        <span className="ml-[46px] flex h-[19px] w-[21px] items-center justify-center border border-[#888] bg-[#e8e8e8]">
          <ChevronsDown size={15} className="text-[#222]" strokeWidth={1.8} />
        </span>
      </div>
      <div className="h-[3px] bg-white" />
      <div className="h-[3px] bg-[#5eb0e0]" />
    </div>
  );
}

const OUTER = "M828 100C823 118 820 140 823 165C828 205 858 250 905 270C915 273 922 280 925 287L443 437C410 447 382 480 382 513C382 555 420 597 462 599L1410 632C1455 632 1495 600 1495 555C1495 525 1475 487 1445 473L987 290L983 290C982 265 968 235 937 220C910 210 880 185 880 147C880 135 882 122 885 100Z";
const HOLE = "M944 342Q953 339 963 342L1425 527C1433 532 1439 543 1438 553C1437 564 1428 573 1412 575L463 542C450 541 441 530 440 517C441 505 448 495 458 492Z";
const FACE = "M835 100C832 115 831 135 834 160C840 205 870 250 913 268C925 272 935 282 938 293L445 447C415 457 391 485 391 517C391 555 425 595 462 595L1408 628C1450 628 1490 595 1490 550C1490 525 1472 490 1445 481L978 295C980 270 968 238 937 227C910 218 875 185 875 147C875 135 876 122 879 100Z";
const FACE_HOLE = "M943 337Q953 333 963 337L1425 522C1440 530 1448 543 1447 553C1446 570 1430 584 1412 584L465 551C448 551 436 535 435 517C435 503 445 492 458 488Z";

function Triad({ x, y, len }: { x: number; y: number; len: number }) {
  return (
    <g>
      <path d={`M${x} ${y}V${y - len + 8}`} stroke="#1f7a2e" strokeWidth="4" />
      <path d={`M${x - 4} ${y - len + 9}L${x} ${y - len}L${x + 4} ${y - len + 9}Z`} fill="#1f8a32" />
      <path d={`M${x} ${y + 1}H${x + len - 6}`} stroke="#c4282c" strokeWidth="3.4" />
      <path d={`M${x + len - 7} ${y - 3}L${x + len + 1} ${y + 1}L${x + len - 7} ${y + 5}Z`} fill="#c4282c" />
      <circle cx={x + 1} cy={y + 4} r="4" fill="#1a1ab4" />
      <text x={x} y={y - len - 2} textAnchor="middle" fontSize="10" fontFamily="Liberation Sans" fill="#1f8a32">Y</text>
      <text x={x + len + 3} y={y + 5} textAnchor="middle" fontSize="10" fontFamily="Liberation Sans" fill="#d81e1e">X</text>
    </g>
  );
}

function Hanger() {
  return (
    <svg width="1224" height="859" viewBox="374 118 1224 859" className="absolute left-0 top-0">
      <defs>
        <linearGradient id="bevel" x1="0" y1="0" x2="0" y2="1">
          <stop offset="0" stopColor="#8a8c9e" />
          <stop offset="0.6" stopColor="#6d6f81" />
          <stop offset="1" stopColor="#565867" />
        </linearGradient>
      </defs>
      <path d={`${OUTER}${HOLE}`} fillRule="evenodd" fill="url(#bevel)" stroke="#111" strokeWidth="1" />
      <path d="M465 546.500L1412 579.500M987 292L1445 477M443 439L923 289" stroke="#a0a2b4" strokeWidth="2" fill="none" />
      <path d={`${FACE}${FACE_HOLE}`} fillRule="evenodd" fill="#4f515f" stroke="#111" strokeWidth="1" />
      <path d="M443 437L445 447M462 599L462 595M1410 632L1408 628M1445 473L1445 481M463 542L465 551M1412 575L1412 584M1425 527L1425 522M458 492L458 488M944 342L943 337M963 342L963 337M913 268L905 270M938 220L937 227M983 290L978 295M925 287L938 293" stroke="#111" />
      <path d="M443 441L923 291" stroke="#111" strokeWidth="0.8" />
      <path d="M1050 100L1051 141C1056 152 1068 160 1081 160C1094 160 1103 152 1108 143L1108 100Z" fill="#707284" stroke="#111" />
      <path d="M1060 100L1060 142C1065 149 1072 153 1080 153C1090 153 1098 149 1103 143L1103 100Z" fill="#4f515f" stroke="#111" />
      <path d="M1051 141L1060 142M1108 143L1103 143" stroke="#111" />

      <path d="M1445 473C1475 487 1495 525 1495 555C1495 600 1455 632 1410 632" fill="none" stroke="#05f005" strokeWidth="3" />
      <path d="M1445 473C1475 487 1495 525 1495 555C1495 600 1455 632 1410 632" fill="none" stroke="#111" strokeWidth="1.2" strokeDasharray="4 7" />
      <path d="M387 528L1495 561" stroke="#000" strokeWidth="3" shapeRendering="crispEdges" />
      <path d="M385 522L1495 561" stroke="#ff0000" strokeWidth="3" shapeRendering="crispEdges" />
      <path d="M374 525H386" stroke="#fff" strokeWidth="1" />
      <circle cx="384" cy="528" r="4" fill="#05e805" stroke="#111" strokeWidth="0.6" />
      <circle cx="1495" cy="560" r="4" fill="#000" />

      <path d="M949 396L939 541" stroke="#3a3a3a" strokeWidth="2" />
      <path d="M949 396L939 541" stroke="#fff" strokeWidth="1" />
      <path d="M939 545L1014 563" stroke="#3a3a3a" strokeWidth="2" />
      <path d="M939 545L1014 563" stroke="#fff" strokeWidth="1" />
      <circle cx="939" cy="542" r="3" fill="#fff" stroke="#222" />
      <circle cx="939" cy="546" r="3" fill="#fff" stroke="#222" />

      <Triad x={932} y={611} len={28} />
      <Triad x={417} y={918} len={28} />
    </svg>
  );
}

function TagDot() {
  return <span className="absolute -left-[3px] top-1/2 h-[6px] w-[6px] -translate-y-1/2 rounded-full border border-black bg-white" />;
}

const paneItems = [
  <Ico key="a" s={19}><path d="M1 12L12 2l11 10" stroke="#3f8cb8" strokeWidth="3" /><path d="M5 12l7-6 7 6v10H5z" fill="#f3f3f3" /><rect x="10" y="15" width="4" height="7" fill="#333" /></Ico>,
  <Ico key="b" s={19}><path d="M4 7l5-3v17l-5-1zM9 4l5-2v19l-5 0zM14 2l6 3v16l-6 0z" fill="#ededed" stroke="#555" strokeWidth="0.7" /></Ico>,
  <Ico key="c" s={20}><path d="M2 4h8l2 3h9v3H6L2 20z" fill="#d8d8d8" /><path d="M6 10h17l-4 11H2z" fill="#f7f7f7" /></Ico>,
  <Ico key="d" s={20}><rect x="1" y="3" width="22" height="18" fill="#f1f1f1" stroke="#e0b420" /><path d="M4 7h8v3H9v4h4v3H4v-3h3v-4H4z" fill="#e7b51f" /><path d="M15 6h6v5h-6zM15 14h6v3h-6z" fill="#333" /></Ico>,
  <ColorBallI key="e" s={20} />,
  <Ico key="f" s={20}><rect x="2" y="2" width="20" height="20" fill="#f3f3f3" /><rect x="2" y="2" width="20" height="3" fill="#3a87b0" /><path d="M4 9h5v3H4zM4 15h5v3H4z" fill="#3a87b0" /><path d="M11 10h9M11 13h9M11 16h9M11 19h9" stroke="#333" /></Ico>,
  <Ico key="g" s={20}><path d="M1 4h15v10H6l-4 4v-4H1z" fill="#3f8cb8" /><path d="M11 11h12v8h-2v3l-3-3h-7z" fill="#f3f3f3" /></Ico>,
];

function Viewport() {
  return (
    <div className="relative min-h-0 flex-1 overflow-hidden bg-[#c3c7d2]">
      <Hanger />
      {/* dimension tags */}
      <div className="absolute left-[575px] top-[254px] flex h-[25px] w-[87px] border border-black bg-white text-[10.8px] text-black shadow-[0_0_0_1px_#fff]">
        <TagDot />
        <span className="flex w-[24px] items-center justify-center bg-[#ff0000] pl-[2px] text-white">dX:</span>
        <span className="flex flex-1 items-center border-l border-black pl-[4px]">7.8262in</span>
      </div>
      <div className="absolute left-[638px] top-[430px] flex h-[28px] w-[96px] border border-black bg-white text-[10.8px] text-black shadow-[0_0_0_1px_#fff]">
        <TagDot />
        <span className="flex w-[33px] items-center justify-center bg-black pl-[2px] text-white">Dist:</span>
        <span className="flex flex-1 items-center pl-[3px]">7.8263in</span>
      </div>
      {/* sash handle */}
      <div className="absolute left-0 top-[419px] flex h-[37px] w-[8px] items-center justify-center bg-[#4b4b4b]">
        <div className="h-[4px] w-[4px] rounded-full bg-[#d0d0d0]" />
      </div>
      {/* view controls */}
      <div className="absolute right-[12px] top-[8px] flex items-center text-[#989ca6]">
        <svg width="14" height="15" viewBox="0 0 14 15" fill="none" className="shrink-0"><rect x="0.5" y="0.5" width="13" height="14" stroke="#9ba0aa" /><path d="M5 3L2 7.500 5 12z" fill="#7d818b" /></svg>
        <svg width="14" height="15" viewBox="0 0 14 15" fill="none" className="ml-[12px] shrink-0"><rect x="0.5" y="0.5" width="13" height="14" stroke="#9ba0aa" /><path d="M9 3l3 4.500L9 12z" fill="#7d818b" /></svg>
        <div className="ml-[14px] mt-[8px] h-[4px] w-[11px] bg-[#8f939d]" />
        <svg width="14" height="12" viewBox="0 0 14 12" fill="none" className="ml-[13px] shrink-0"><path d="M4 3V.5h9.500v7H10M.5 3.500h9.500v8H.5z" stroke="#8f939d" /></svg>
        <X size={15} strokeWidth={1.6} className="ml-[12px] shrink-0" />
      </div>
      {/* task pane tabs */}
      <div className="absolute right-0 top-[51px] flex w-[26px] flex-col border-b border-l border-[#7a7a7a]">
        {paneItems.map((p, n) => (
          <div key={n} className={`flex h-[24px] items-center justify-center border-t border-[#7a7a7a] ${n === 4 ? "bg-[#ababab]" : "bg-[#2d2d2d]"}`}>
            {p}
          </div>
        ))}
      </div>
    </div>
  );
}

function WinLogo() {
  return (
    <svg width="17" height="17" viewBox="0 0 17 17" className="shrink-0"><path d="M0 2.500L7 1.400V8H0zM8 1.200L17 0v8H8zM0 9h7v6.600L0 14.500zM8 9h9v8l-9-1.200z" fill="#fff" /></svg>
  );
}

function Corgi() {
  return (
    <svg width="72" height="40" viewBox="0 0 72 40" className="ml-auto shrink-0">
      <ellipse cx="48" cy="46" rx="46" ry="20" fill="#7a9a1e" />
      <ellipse cx="30" cy="40" rx="14" ry="6" fill="#4c7a12" />
      <path d="M22 18c6-4 20-4 30-3l3 2c4-3 5-9 3-12 4 1 5 8 2 13-2 3-4 4-5 4l1 11h-3l-2-7c-6 2-14 2-18 1l-1 8h-3l-1-9c-4-1-6-4-6-8z" fill="#dca56f" />
      <path d="M12 2l6 6h6l5-7 1 11c0 6-4 9-9 9s-9-4-9-10z" fill="#d79a5e" stroke="#8a5d34" strokeWidth="0.5" />
      <path d="M15 13l5 1 4-1 2 5-4 6c-4 0-6-3-7-6z" fill="#fff" />
      <path d="M19 20c1 2 2 4 3 4s2-2 2-4z" fill="#e2566a" />
      <path d="M14 20c2 6 4 10 8 11 4-2 5-5 5-10-4 3-9 3-13-1z" fill="#f4f4f4" />
      <circle cx="17" cy="13" r="1" fill="#222" />
      <circle cx="24" cy="13" r="1" fill="#222" />
    </svg>
  );
}

function Taskbar() {
  return (
    <div className="flex h-[40px] shrink-0 items-center bg-gradient-to-r from-[#233a41] to-[#182846] text-white font-['Open_Sans',sans-serif]">
      <div className="flex w-[48px] shrink-0 justify-center"><WinLogo /></div>
      <div className="flex h-full w-[288px] shrink-0 items-center overflow-hidden border-b-2 border-[#c8c8c8] bg-[#f2f2f2] pl-[12px] text-[14px] text-[#222]">
        <svg width="17" height="19" viewBox="0 0 17 19" fill="none" className="shrink-0"><circle cx="10.500" cy="6.500" r="5.500" stroke="#222" strokeWidth="1.2" /><path d="M7 11L1 18" stroke="#222" strokeWidth="1.4" /></svg>
        <span className="ml-[11px] whitespace-nowrap">Type here to search</span>
        <Corgi />
      </div>
      <svg width="16" height="20" viewBox="0 0 16 20" fill="none" className="ml-[16px] shrink-0"><rect x="1.5" y="4.5" width="10" height="10" stroke="#fff" /><path d="M1 1h11M1 18h11M14 3v3M14 9v3" stroke="#fff" strokeWidth="1.2" /></svg>
      <svg width="27" height="27" viewBox="0 0 27 27" className="ml-[30px] shrink-0">
        <circle cx="13.5" cy="13.5" r="13" fill="#2f8fd8" />
        <path d="M1 12C3 2 20-2 26 11c1 4-3 7-7 6 3-3 1-7-5-7C8 10 5 14 7 20 3 18 1 15 1 12z" fill="#36c5a0" />
        <path d="M7 20c-2-5 2-10 7-10 3 0 6 2 6 4-4-1-6 2-4 6 2 3 7 3 9 1-3 5-12 6-18-1z" fill="#0c5da5" />
      </svg>
      <svg width="25" height="25" viewBox="0 0 25 25" className="ml-[23px] shrink-0">
        <circle cx="12.5" cy="12.5" r="12" fill="#e2412f" />
        <path d="M12.5 12.5L2.2 18.500A12 12 0 0 1 2 7z" fill="#2fa44f" />
        <path d="M2.2 18.500A12 12 0 0 0 12 24.500L18 14 12.500 12.500z" fill="#2fa44f" />
        <path d="M24.5 12A12 12 0 0 1 11 24.500L17 13z" fill="#f8c930" />
        <circle cx="12.5" cy="12.5" r="5.6" fill="#fff" />
        <circle cx="12.5" cy="12.5" r="4.3" fill="#3f86ef" />
      </svg>
      <div className="relative ml-[16px] flex h-full w-[41px] shrink-0 items-center justify-center border-b-[3px] border-[#76b9ed]">
        <svg width="22" height="22" viewBox="0 0 22 22"><path d="M0 2h8l2 3h12v16H0z" fill="#f4c33f" /><rect x="0" y="7" width="22" height="14" fill="#f8d568" /><rect x="8" y="13" width="7" height="8" fill="#2c7ad6" /></svg>
      </div>
      <div className="ml-[5px] flex h-full w-[48px] shrink-0 items-center justify-center border-b-[3px] border-[#76b9ed] bg-[#4a5f68]">
        <div className="relative flex h-[26px] w-[24px] items-start justify-center bg-[#b3201f] pt-[1px] text-[11px] font-bold leading-[11px] text-white">
          SW
          <span className="absolute bottom-0 left-0 right-0 bg-[#222] text-center text-[7px] leading-[8px]">2017</span>
        </div>
      </div>
      <div className="ml-auto flex h-full shrink-0 items-center">
        <div className="relative">
          <svg width="24" height="16" viewBox="0 0 24 16"><path d="M5 16a5 5 0 0 1-1-9.800A7 7 0 0 1 17 5a5.500 5.500 0 0 1 2 11z" fill="#a7cdf0" /></svg>
          <span className="absolute -right-[2px] -top-[7px] flex h-[12px] w-[12px] items-center justify-center rounded-full bg-[#d92b2b] text-[8px] font-bold">1</span>
        </div>
        <span className="ml-[9px] text-[13.5px]">29°F</span>
        <span className="ml-[9px] text-[13.5px]">Cloudy</span>
        <ChevronUp size={18} strokeWidth={1.3} className="ml-[22px] shrink-0" />
        <svg width="12" height="20" viewBox="0 0 12 20" fill="none" className="ml-[10px] shrink-0"><rect x="1" y="5" width="7" height="9" rx="2" stroke="#fff" /><path d="M8 8l3-2v7l-3-2M2 2h6M2 18h6" stroke="#fff" /></svg>
        <Wifi size={16} strokeWidth={1.3} className="ml-[10px] shrink-0 rotate-[-30deg]" />
        <Volume2 size={17} strokeWidth={1.3} className="ml-[6px] shrink-0" />
        <div className="flex w-[74px] shrink-0 flex-col items-center text-[12.5px] leading-[19px]">
          <span>7:40 PM</span>
          <span>3/23/2024</span>
        </div>
        <div className="relative ml-[8px] h-[30px] w-[28px] shrink-0">
          <svg width="17" height="16" viewBox="0 0 17 16" className="absolute left-0 top-[5px]"><path d="M0 0h16v11H6l-3 4v-4H0z" fill="#fff" /><path d="M3 3h10M3 6h10" stroke="#222" /></svg>
          <span className="absolute left-[8px] top-[14px] flex h-[16px] w-[16px] items-center justify-center rounded-full border border-[#888] bg-[#2c2c2c] text-[10px]">5</span>
        </div>
        <div className="relative ml-[8px] mr-[22px] h-[24px] w-[21px] shrink-0">
          <svg width="21" height="18" viewBox="0 0 21 18"><path d="M6 1h9l5 14H8z" fill="#d84fc1" /><path d="M6 1h7L7 17H1z" fill="#2f8fe8" /><path d="M11 5l4-4 5 14h-7z" fill="#f29ad5" /></svg>
          <span className="absolute bottom-0 right-0 rounded-[1px] bg-[#f7d21d] px-[1px] text-[6.5px] font-bold leading-[8px] text-black">PRE</span>
        </div>
      </div>
    </div>
  );
}

function StatusBar() {
  return (
    <div className="flex h-[19px] shrink-0 items-center border-t border-[#8b8b8b] bg-[#4b4b4b] text-[11.5px] text-[#eee]">
      <span className="pl-[1px]">hanger</span>
      <div className="ml-auto mr-[3px] flex h-[16px] items-center">
        <div className="h-full w-[1px] bg-[#d6d6d6]" />
        <div className="ml-[7px] h-full w-[1px] bg-[#d6d6d6]" />
        <span className="ml-[4px] w-[67px]">Editing Part</span>
        <div className="h-full w-[1px] bg-[#d6d6d6]" />
        <div className="ml-[14px] h-full w-[1px] bg-[#d6d6d6]" />
        <span className="ml-[42px] w-[44px]">IPS</span>
        <Caret />
        <svg width="16" height="14" viewBox="0 0 16 14" className="ml-[65px] mr-[1px] shrink-0"><path d="M1 8l8-7 6 3-8 8z" fill="#e6e6e6" stroke="#777" strokeWidth="0.5" /><path d="M2 10l6 3 7-6" stroke="#ddd" fill="none" /></svg>
      </div>
    </div>
  );
}

export default function App() {
  return (
    <div className="flex h-[1050px] w-[1680px] flex-col overflow-hidden bg-[#4b4b4b] font-['Noto_Sans',sans-serif]">
      <div className="relative flex shrink-0 flex-col">
        <Logo />
        <TitleBar />
        <Ribbon />
      </div>
      <div className="relative flex min-h-0 flex-1 border-t border-[#8b8b8b]">
        <Tabs />
        <MeasureDialogWrap />
        <div className="flex w-[374px] shrink-0 flex-col border-r border-[#8b8b8b] pt-[22px]">
          <div className="flex min-h-0 flex-1">
            <div className="flex w-[49px] shrink-0 flex-col">
              <div className="h-[572px] shrink-0 border-b border-r border-[#8b8b8b]">
                <Grip w="w-[40px]" />
                <ToolCol rows={col1} pad="pl-[5px]" cm="ml-[6px]" sepH="h-[7px] pl-[5px]" line="w-[40px]" />
              </div>
              <div className="h-[178px] w-[34px] shrink-0 border-b border-r border-[#8b8b8b]">
                <Grip w="w-[26px]" />
                <div className="pt-[3px]">
                  <ToolCol rows={col3} pad="pl-[5px]" cm="" sepH="" line="" />
                </div>
              </div>
            </div>
            <div className="h-[364px] w-[47px] shrink-0 border-b border-[#8b8b8b]">
              <Grip w="w-[40px]" />
              <ToolCol rows={col2} pad="pl-[5px]" cm="ml-[6px]" sepH="h-[7px] pl-[5px]" line="w-[40px]" />
            </div>
            <FeatureTree />
          </div>
        </div>
        <div className="flex min-w-0 flex-1 flex-col border-r border-[#8b8b8b]">
          <Viewport />
          <div className="h-[14px] shrink-0 bg-[#4b4b4b]" />
        </div>
        <div className="flex w-[82px] shrink-0">
          <div className="h-[690px] w-[51px] shrink-0 border-r border-b border-[#8b8b8b]">
            <Grip w="w-[44px]" />
            <ToolCol rows={rightA} pad="pl-[7px]" cm="ml-[6px]" sepH="h-[8px] pl-[8px]" line="w-[40px]" />
          </div>
          <div className="h-[385px] w-[31px] shrink-0 border-b border-[#8b8b8b]">
            <Grip w="w-[28px]" />
            <ToolCol rows={rightB} pad="pl-[5px]" cm="" sepH="" line="" />
          </div>
        </div>
        {/* activation watermark, painted over the toolbars too */}
        <div className="absolute left-[1371px] top-[798px] z-10 whitespace-nowrap text-[#a9adb8]">
          <div className="text-[19px] leading-[26px]">Activate Windows</div>
          <div className="text-[14.2px] leading-[18px]">Go to Settings to activate Windows.</div>
        </div>
      </div>
      <StatusBar />
      <Taskbar />
    </div>
  );
}

function MeasureDialogWrap() {
  // the dialog floats above the tree; its offset is measured from the body, which starts at y=118
  return (
    <div className="absolute left-0 top-[-118px]">
      <MeasureDialog />
    </div>
  );
}
